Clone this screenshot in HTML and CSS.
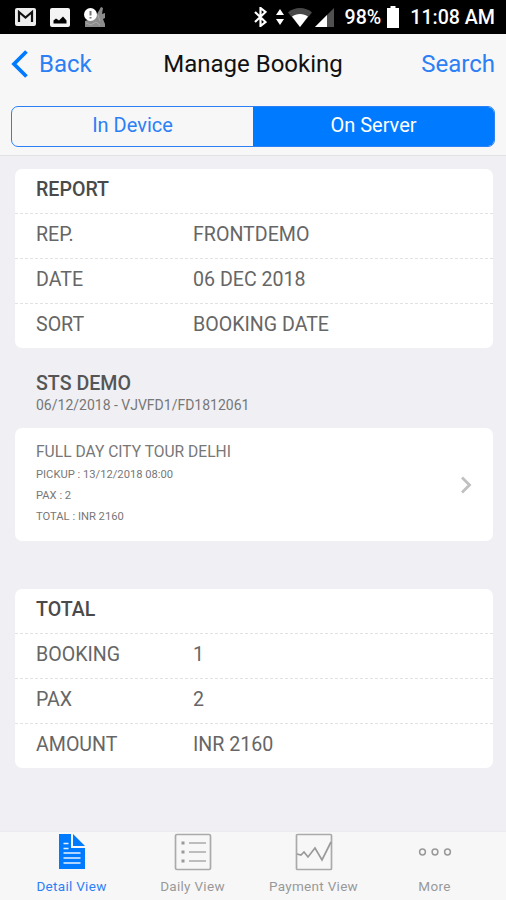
FILE: index.html
```
<!DOCTYPE html>
<html lang="en">
<head>
    <meta charset="UTF-8">
    <meta name="viewport" content="width=device-width, initial-scale=1.0">
    <title>Manage Booking</title>
    <link rel="stylesheet" href="styles.css">
</head>
<body>
    <div class="status-bar">
        <div class="status-left">
            <svg width="21" height="18" viewBox="0 0 21 18">
                <rect width="21" height="18" rx="2" fill="#eee"/>
                <path d="M4 14V4l6.500 5.500L17 4v10" fill="none" stroke="#111" stroke-width="2.200"/>
            </svg>
            <svg width="20" height="19" viewBox="0 0 20 19">
                <rect width="20" height="19" rx="2" fill="#f4f4f4"/>
                <path d="M3.500 15.500v-3l2.500-2 3 2 4-4 3.500 4v3z" fill="#000"/>
            </svg>
            <svg width="22" height="21" viewBox="0 0 22 21">
                <path d="M1 20v-6l6-2 6-5 4-7 2 1-1 6 3-1v5l-2 1 2 5v3z" fill="#8c8c8c"/>
                <path d="M2 16l5 2 5-3 4 3M14 8l2 6" fill="none" stroke="#aaa"/>
                <circle cx="6.500" cy="7.500" r="6.500" fill="#fff"/>
                <path d="M6.500 4v4.500M6.500 10v1.500" stroke="#777" stroke-width="2"/>
            </svg>
        </div>
        <div class="status-right">
            <svg width="13" height="20" viewBox="0 0 13 20">
                <path d="M1 5l10.500 10L6.500 19V1l5 4L1 15" fill="none" stroke="#fff" stroke-width="2.200"/>
            </svg>
            <svg class="arrows" width="8" height="16" viewBox="0 0 8 16">
                <path d="M4 0l4 6H0zM4 16L0 10h8z" fill="#fff"/>
            </svg>
            <svg class="wifi" width="24" height="19" viewBox="0 0 24 19">
                <path d="M12 19L0 4.500C6-1.500 18-1.500 24 4.500z" fill="#484848"/>
                <path d="M12 19L4 8.500c4-3.500 12-3.500 16 0z" fill="#fff"/>
            </svg>
            <svg class="signal" width="19" height="19" viewBox="0 0 19 19">
                <path d="M0 19L19 0v19z" fill="#505050"/>
                <path d="M0 19L12 7v12z" fill="#fff"/>
            </svg>
            <span class="percent">98%</span>
            <svg class="battery" width="12" height="22" viewBox="0 0 12 22">
                <path d="M3.500 0h5v2H12v20H0V2h3.500z" fill="#fff"/>
            </svg>
            <span class="time">11:08 AM</span>
        </div>
    </div>

    <div class="header">
        <div class="navbar">
            <a class="back">
                <svg width="17" height="28" viewBox="0 0 17 28">
                    <path d="M15.500 1.500L3 14l12.500 12.500" fill="none" stroke="#007aff" stroke-width="3.800"/>
                </svg>
                <span>Back</span>
            </a>
            <h1>Manage Booking</h1>
            <a class="search">Search</a>
        </div>
        <div class="segmented">
            <a class="segment">In Device</a>
            <a class="segment active">On Server</a>
        </div>
    </div>

    <div class="content">
        <div class="card">
            <div class="row title">REPORT</div>
            <div class="row"><span>REP.</span><span>FRONTDEMO</span></div>
            <div class="row"><span>DATE</span><span>06 DEC 2018</span></div>
            <div class="row"><span>SORT</span><span>BOOKING DATE</span></div>
        </div>

        <div class="group-title">
            <h2>STS DEMO</h2>
            <p>06/12/2018 - VJVFD1/FD1812061</p>
        </div>

        <div class="card booking">
            <div>
                <h3>FULL DAY CITY TOUR DELHI</h3>
                <p>PICKUP : 13/12/2018 08:00</p>
                <p>PAX : 2</p>
                <p>TOTAL : INR 2160</p>
            </div>
            <svg width="12" height="18" viewBox="0 0 12 18">
                <path d="M2 1.500L9.500 9 2 16.500" fill="none" stroke="#c0c0c0" stroke-width="2.800"/>
            </svg>
        </div>

        <div class="card">
            <div class="row title">TOTAL</div>
            <div class="row"><span>BOOKING</span><span>1</span></div>
            <div class="row"><span>PAX</span><span>2</span></div>
            <div class="row"><span>AMOUNT</span><span>INR 2160</span></div>
        </div>
    </div>

    <div class="tabbar">
        <a class="tab active">
            <svg width="38" height="38" viewBox="0 0 38 38">
                <path d="M6 1h12v14h14v21H6z" fill="#007aff"/>
                <path d="M20 1v12h12z" fill="#007aff"/>
                <path d="M10.500 10.500h5M10.500 15.500h5M10.500 20h17M10.500 25h17M10.500 30h17" stroke="#e9f2ff" stroke-width="1.700"/>
            </svg>
            <span>Detail View</span>
        </a>
        <a class="tab">
            <svg width="38" height="38" viewBox="0 0 38 38" fill="none" stroke="#aaa" stroke-width="1.700">
                <rect x="1.500" y="1.500" width="35" height="35" rx="1.500"/>
                <path d="M15 10h17M15 19h17M15 28h17"/>
                <path d="M7.500 10h3M7.500 19h3M7.500 28h3" stroke="#999" stroke-width="3"/>
            </svg>
            <span>Daily View</span>
        </a>
        <a class="tab">
            <svg width="38" height="38" viewBox="0 0 38 38" fill="none" stroke="#aaa" stroke-width="1.700">
                <rect x="1.500" y="1.500" width="35" height="35" rx="1"/>
                <path d="M2 21l4 1 3-3 4 5 7-9 7 12 9-18" stroke="#999"/>
            </svg>
            <span>Payment View</span>
        </a>
        <a class="tab">
            <svg width="38" height="38" viewBox="0 0 38 38" fill="none" stroke="#999" stroke-width="1.500">
                <circle cx="6.500" cy="19" r="2.900"/>
                <circle cx="19" cy="19" r="2.900"/>
                <circle cx="31.500" cy="19" r="2.900"/>
            </svg>
            <span>More</span>
        </a>
    </div>
</body>
</html>
```
FILE: styles.css
```
* {
    box-sizing: border-box;
    margin: 0;
    padding: 0;
}
body {
    width: 506px;
    height: 900px;
    display: flex;
    flex-direction: column;
    overflow: hidden;
    background: #efeff4;
    color: #666;
    font-family: Roboto, sans-serif;
}
svg {
    display: block;
    flex: none;
}
.status-bar {
    height: 34px;
    padding: 0 11px 0 15px;
    display: flex;
    justify-content: space-between;
    align-items: center;
    background: #000;
    color: #fff;
    font-size: 19.6px;
    font-weight: 500;
}
.status-left {
    display: flex;
    align-items: center;
    gap: 14px;
}
.status-right {
    display: flex;
    align-items: center;
    white-space: nowrap;
}
.arrows {
    margin-left: 9px;
}
.wifi {
    margin-left: 4px;
}
.signal {
    margin-left: 3px;
}
.percent {
    margin-left: 11px;
}
.battery {
    margin-left: 6px;
}
.time {
    margin-left: 11px;
}
.header {
    height: 122px;
    padding: 0 11px;
    background: #f7f7f8;
    border-bottom: 1px solid #e2e2e5;
}
.navbar {
    height: 60px;
    display: grid;
    grid-template-columns: 1fr auto 1fr;
    align-items: center;
    font-size: 24px;
}
.navbar h1 {
    color: #111;
    font-size: 24px;
    font-weight: 400;
}
.back, .search, .segment {
    color: #2b80f5;
}
.back {
    display: flex;
    align-items: center;
    gap: 11px;
}
.search {
    text-align: right;
}
.segmented {
    height: 41px;
    margin-top: 12px;
    display: flex;
    overflow: hidden;
    border: 1px solid #2b80f5;
    border-radius: 7px;
    font-size: 20px;
}
.segment {
    flex: 1;
    line-height: 36px;
    text-align: center;
}
.segment.active {
    background: #007aff;
    color: #fff;
}
.content {
    flex: 1;
    padding: 13px 13px 0 15px;
}
.card {
    background: #fff;
    border-radius: 7px;
}
.row {
    height: 45px;
    padding: 0 21px 4px;
    display: grid;
    grid-template-columns: 157px 1fr;
    align-items: center;
    border-bottom: 1px dashed #e2e2e4;
    font-size: 19.6px;
}
.row:last-child {
    height: 44px;
    border-bottom: 0;
}
.title {
    font-weight: 500;
    color: #4a4a4a;
}
.group-title {
    height: 80px;
    padding: 24px 21px 0;
}
.group-title h2 {
    font-size: 19.6px;
    line-height: 24px;
    font-weight: 500;
    color: #555;
}
.group-title p {
    font-size: 14px;
    line-height: 18px;
    color: #777;
}
.booking {
    height: 113px;
    margin-bottom: 48px;
    padding: 12px 21px 0;
    display: flex;
    justify-content: space-between;
    color: #777;
}
.booking h3 {
    font-size: 15.6px;
    line-height: 24px;
    font-weight: 400;
}
.booking p {
    font-size: 11.2px;
    line-height: 21px;
}
.booking svg {
    margin-top: 36px;
}
.tabbar {
    height: 69px;
    display: flex;
    justify-content: center;
    background: #f7f7f8;
    border-top: 1px solid #ececef;
}
.tab {
    width: 121px;
    padding-top: 1px;
    display: flex;
    flex-direction: column;
    align-items: center;
    gap: 6px;
    color: #999;
    font-size: 13.5px;
    line-height: 18px;
    letter-spacing: 0.3px;
}
.tab.active {
    color: #2b80f5;
}
```
